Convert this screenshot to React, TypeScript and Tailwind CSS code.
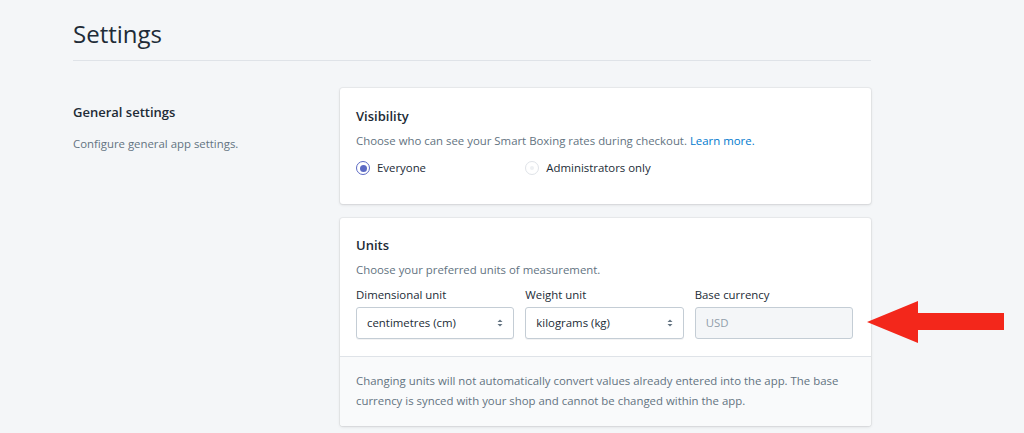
import React from 'react';

function SelectArrows() {
  return (
    <svg width="8" height="10" viewBox="0 0 8 10" className="text-[#637381]">
      <path d="M4 1.5 L6.5 4 H1.5 Z" fill="currentColor" />
      <path d="M4 8.5 L6.5 6 H1.5 Z" fill="currentColor" />
    </svg>
  );
}

function Radio({ checked, disabled, label }: { checked?: boolean; disabled?: boolean; label: string }) {
  return (
    <label className="flex items-center gap-[7px]">
      <span
        className={`w-[14px] h-[14px] rounded-full border flex items-center justify-center ${
          checked ? 'border-[#5c6ac4] bg-white' : 'border-[#dfe3e8] bg-white'
        }`}
      >
        {checked && <span className="w-[7px] h-[7px] rounded-full bg-[#5c6ac4]" />}
        {disabled && !checked && <span className="w-[4px] h-[4px] rounded-full bg-[#eef0f3]" />}
      </span>
      <span className="text-[#212b36]">{label}</span>
    </label>
  );
}

function Field({ label, value, select, disabled }: { label: string; value: string; select?: boolean; disabled?: boolean }) {
  return (
    <div className="flex flex-col">
      <span className="text-[#212b36] leading-[20px] mb-[2px]">{label}</span>
      <div
        className={`h-[32px] rounded-[3px] border flex items-center justify-between pl-[10px] pr-[9px] ${
          disabled
            ? 'bg-[#f4f6f8] border-[#c4cdd5] text-[#919eab]'
            : 'bg-white border-[#c4cdd5] text-[#212b36] shadow-[0_1px_0_0_rgba(22,29,37,0.05)]'
        }`}
      >
        <span>{value}</span>
        {select && <SelectArrows />}
      </div>
    </div>
  );
}

export default function App() {
  return (
    <div className="min-h-[433px] w-full bg-[#f4f6f8] font-['Open_Sans',sans-serif] text-[11.4px] leading-[20px] relative overflow-hidden">
      <div className="ml-[73px] w-[798px]">
        <div className="pt-[18px] pb-[10px] border-b border-[#dfe3e8]">
          <h1 className="text-[24px] leading-[32px] text-[#212b36] font-normal">Settings</h1>
        </div>

        <div className="flex mt-[27px]">
          <div className="w-[267px] pt-[14px] pr-5">
            <h2 className="text-[13px] font-semibold text-[#212b36] leading-[20px]">General settings</h2>
            <p className="mt-[12px] text-[#637381]">Configure general app settings.</p>
          </div>

          <div className="flex-1 flex flex-col gap-[14px]">
            <div className="bg-white rounded-[3px] shadow-[0_0_0_1px_rgba(63,63,68,0.05),0_1px_3px_0_rgba(63,63,68,0.15)] pl-4 pr-[18px] pt-[18px] pb-[26px]">
              <h3 className="text-[13px] font-semibold text-[#212b36]">Visibility</h3>
              <p className="mt-[5px] text-[#637381]">
                Choose who can see your Smart Boxing rates during checkout.{' '}
                <a className="text-[#007ace]">Learn more.</a>
              </p>
              <div className="mt-[7px] grid grid-cols-3 gap-[11px]">
                <Radio checked label="Everyone" />
                <Radio disabled label="Administrators only" />
              </div>
            </div>

            <div className="bg-white rounded-[3px] shadow-[0_0_0_1px_rgba(63,63,68,0.05),0_1px_3px_0_rgba(63,63,68,0.15)] overflow-hidden">
              <div className="pl-4 pr-[18px] pt-[17px] pb-[17px] border-b border-[#dfe3e8]">
                <h3 className="text-[13px] font-semibold text-[#212b36]">Units</h3>
                <p className="mt-[5px] text-[#637381]">Choose your preferred units of measurement.</p>
                <div className="mt-[5px] grid grid-cols-3 gap-[11px]">
                  <Field label="Dimensional unit" value="centimetres (cm)" select />
                  <Field label="Weight unit" value="kilograms (kg)" select />
                  <Field label="Base currency" value="USD" disabled />
                </div>
              </div>
              <div className="bg-[#f9fafb] px-4 pt-[14px] pb-[15px] text-[#637381]">
                Changing units will not automatically convert values already entered into the app. The base currency is
                synced with your shop and cannot be changed within the app.
              </div>
            </div>
          </div>
        </div>
      </div>

      <svg className="absolute left-[866px] top-[300px]" width="140" height="44" viewBox="0 0 140 44">
        <polygon points="1,22 52,1 52,13 138,13 138,30 52,30 52,43" fill="#f3271b" />
      </svg>
    </div>
  );
}
